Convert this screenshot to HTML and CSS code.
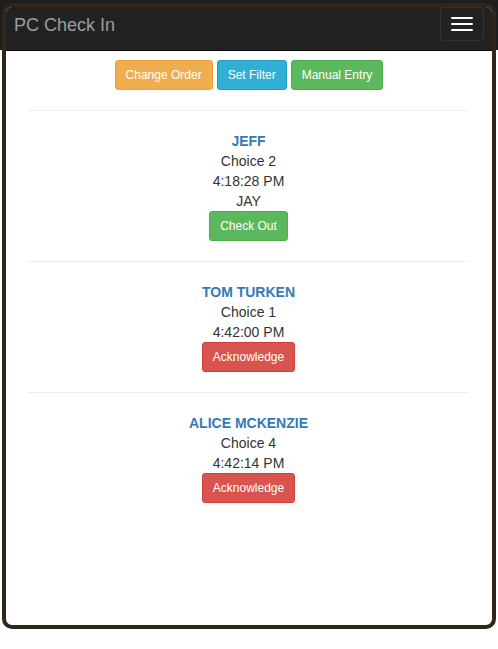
FILE: index.html
```html
<!DOCTYPE html>
<html lang="en">
<head>
    <meta charset="UTF-8">
    <meta name="viewport" content="width=device-width, initial-scale=1.0">
    <title>PC Check In</title>
    <link rel="stylesheet" href="styles.css">
</head>
<body>
    <div class="frame">
        <nav class="navbar">
            <span class="brand">PC Check In</span>
            <button class="toggle" type="button">
                <span class="bar"></span>
                <span class="bar"></span>
                <span class="bar"></span>
            </button>
        </nav>

        <div class="content">
            <div class="actions">
                <button class="btn warning">Change Order</button>
                <button class="btn info">Set Filter</button>
                <button class="btn success">Manual Entry</button>
            </div>

            <hr>
            <div class="entry">
                <div class="name">JEFF</div>
                <div>Choice 2</div>
                <div>4:18:28 PM</div>
                <div>JAY</div>
                <button class="btn success">Check Out</button>
            </div>

            <hr>
            <div class="entry">
                <div class="name">TOM TURKEN</div>
                <div>Choice 1</div>
                <div>4:42:00 PM</div>
                <button class="btn danger">Acknowledge</button>
            </div>

            <hr>
            <div class="entry">
                <div class="name">ALICE MCKENZIE</div>
                <div>Choice 4</div>
                <div>4:42:14 PM</div>
                <button class="btn danger">Acknowledge</button>
            </div>
        </div>
    </div>
</body>
</html>
```

FILE: styles.css
```css
body {
    margin: 0;
    font-family: "Liberation Sans", Arial, sans-serif;
    font-size: 14px;
    line-height: 20px;
    color: #333;
    background-color: #fff;
    background-image: linear-gradient(#1e1e1e, #1e1e1e);
    background-size: 100% 50px;
    background-repeat: no-repeat;
}
.frame {
    margin: 3px 2px 0 2px;
    height: 618px;
    border: 4px solid #30261b;
    border-radius: 10px;
    background: #fff;
    overflow: hidden;
}
.navbar {
    height: 43px;
    background: #222;
    border-bottom: 1px solid #080808;
    display: flex;
    align-items: center;
    justify-content: space-between;
    padding: 0 8px 0 8px;
}
.brand {
    color: #9d9d9d;
    font-size: 18px;
    line-height: 20px;
    margin-top: -8px;
}
.toggle {
    width: 44px;
    height: 34px;
    margin-top: -10px;
    background: transparent;
    border: 1px solid #333;
    border-radius: 4px;
    display: flex;
    flex-direction: column;
    align-items: center;
    justify-content: center;
    gap: 4px;
    padding: 0;
}
.bar {
    display: block;
    width: 22px;
    height: 2px;
    background: #fff;
    border-radius: 1px;
}
.content {
    padding: 9px 23px 0 22px;
    text-align: center;
}
.actions {
    display: flex;
    justify-content: center;
    gap: 4px;
    padding-left: 1px;
}
.btn {
    font-family: "Liberation Sans", Arial, sans-serif;
    font-size: 12px;
    line-height: 18px;
    padding: 5px 10px;
    border: 1px solid transparent;
    border-radius: 3px;
    color: #fff;
    cursor: pointer;
}
.warning {
    background: #f0ad4e;
    border-color: #eea236;
}
.info {
    background: #31b0d5;
    border-color: #269abc;
}
.success {
    background: #5cb85c;
    border-color: #4cae4c;
}
.danger {
    background: #d9534f;
    border-color: #d43f3a;
}
hr {
    margin: 20px 0;
    border: 0;
    border-top: 1px solid #eee;
}
.entry .name {
    color: #337ab7;
    font-weight: bold;
}
```
